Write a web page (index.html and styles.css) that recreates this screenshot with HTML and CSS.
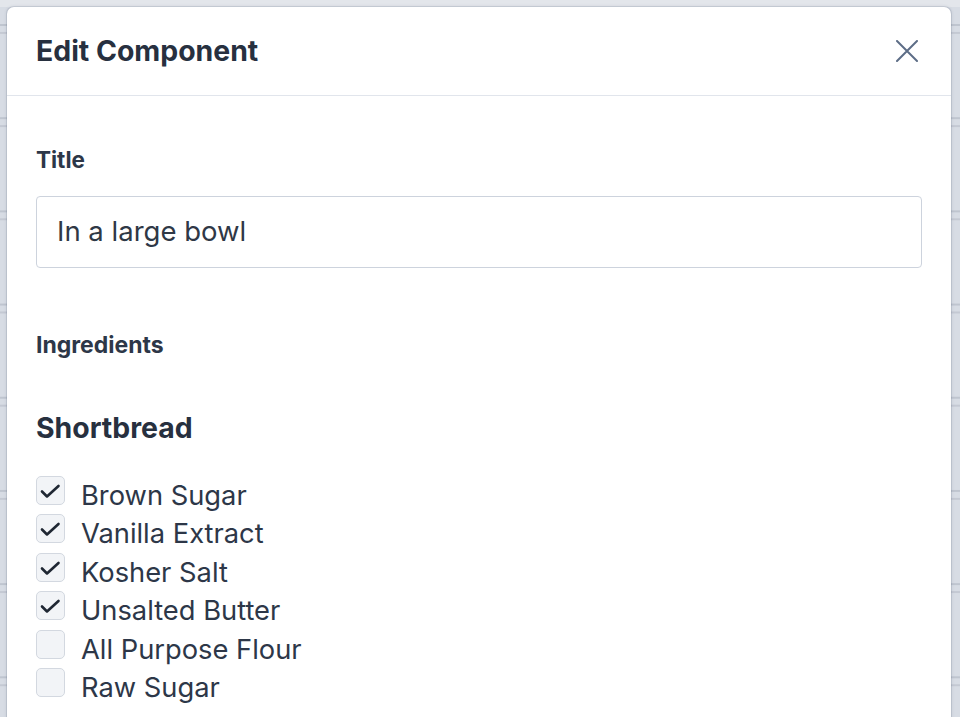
FILE: index.html
```html
<!DOCTYPE html>
<html lang="en">
<head>
<meta charset="utf-8">
<title>Edit Component</title>
<link rel="stylesheet" href="styles.css">
</head>
<body>
<div class="modal">
  <div class="modal-header">
    <h1 class="modal-title">Edit Component</h1>
    <button class="close" aria-label="Close">
      <svg width="22" height="22" viewBox="0 0 22 22"><path d="M1 1 L21 21 M21 1 L1 21" stroke="#5d6d86" stroke-width="2" fill="none" stroke-linecap="round"/></svg>
    </button>
  </div>
  <div class="modal-body">
    <label class="field-label">Title</label>
    <div class="text-input">In a large bowl</div>
    <div class="field-label ingredients">Ingredients</div>
    <h2 class="group-title">Shortbread</h2>
    <ul class="checklist">
      <li class="item"><span class="box checked"><svg width="29" height="29" viewBox="0 0 29 29"><path d="M6 15.5 L11 20.5 L22.5 10" stroke="#1f2733" stroke-width="2.6" fill="none" stroke-linecap="round" stroke-linejoin="round"/></svg></span><span class="item-label">Brown Sugar</span></li>
      <li class="item"><span class="box checked"><svg width="29" height="29" viewBox="0 0 29 29"><path d="M6 15.5 L11 20.5 L22.5 10" stroke="#1f2733" stroke-width="2.6" fill="none" stroke-linecap="round" stroke-linejoin="round"/></svg></span><span class="item-label">Vanilla Extract</span></li>
      <li class="item"><span class="box checked"><svg width="29" height="29" viewBox="0 0 29 29"><path d="M6 15.5 L11 20.5 L22.5 10" stroke="#1f2733" stroke-width="2.6" fill="none" stroke-linecap="round" stroke-linejoin="round"/></svg></span><span class="item-label">Kosher Salt</span></li>
      <li class="item"><span class="box checked"><svg width="29" height="29" viewBox="0 0 29 29"><path d="M6 15.5 L11 20.5 L22.5 10" stroke="#1f2733" stroke-width="2.6" fill="none" stroke-linecap="round" stroke-linejoin="round"/></svg></span><span class="item-label">Unsalted Butter</span></li>
      <li class="item"><span class="box"></span><span class="item-label">All Purpose Flour</span></li>
      <li class="item"><span class="box"></span><span class="item-label">Raw Sugar</span></li>
    </ul>
  </div>
</div>
</body>
</html>
```
FILE: styles.css
```css
html, body {
  margin: 0;
  padding: 0;
  height: 100%;
  overflow: hidden;
}
body {
  font-family: Inter, "Noto Sans", "Liberation Sans", sans-serif;
  color: #2d3748;
  background-color: #d7dce4;
  background-image:
    linear-gradient(to bottom, #e3e6eb 0, #e3e6eb 7px, transparent 7px),
    linear-gradient(to bottom, #bfc5cf 0, #bfc5cf 2px, transparent 2px, transparent 8px, #c4c9d3 8px, #c4c9d3 10px, transparent 10px);
  background-size: 100% 100%, 100% 93.2px;
  background-position: 0 0, 0 24px;
  background-repeat: no-repeat, repeat-y;
  padding: 7px 9px 0 7px;
  box-sizing: border-box;
}
.modal {
  background: #ffffff;
  border-radius: 7px 7px 0 0;
  box-shadow: 0 0 0 1px rgba(60, 72, 95, 0.12), 0 0 3px 1px rgba(60, 72, 95, 0.10);
  height: 730px;
}
.modal-header {
  height: 89px;
  box-sizing: border-box;
  border-bottom: 1px solid #e1e5ec;
  display: flex;
  align-items: center;
  justify-content: space-between;
  padding: 0 33px 0 29px;
}
.modal-title {
  margin: 0;
  font-size: 28.4px;
  font-weight: 700;
  line-height: 34px;
  color: #27303f;
}
.close {
  border: 0;
  background: none;
  padding: 0;
  margin: 0;
  width: 22px;
  height: 22px;
  display: block;
}
.close svg { display: block; }
.modal-body {
  padding: 52px 29px 0 29px;
}
.field-label {
  display: block;
  font-size: 22.5px;
  font-weight: 700;
  line-height: 24px;
  color: #2d3748;
}
.text-input {
  margin-top: 24px;
  height: 72px;
  box-sizing: border-box;
  border: 1.5px solid #cdd3dd;
  border-radius: 4px;
  padding: 0 20px 3px 20px;
  display: flex;
  align-items: center;
  font-size: 27.5px;
  color: #2f3846;
}
.ingredients {
  margin-top: 65px;
  font-size: 23px;
}
.group-title {
  margin: 54px 0 0 0;
  font-size: 28.4px;
  font-weight: 700;
  line-height: 34px;
  color: #27303f;
}
.checklist {
  list-style: none;
  margin: 31px 0 0 0;
  padding: 0;
  display: flex;
  flex-direction: column;
  gap: 9.4px;
}
.item {
  display: flex;
  align-items: center;
  gap: 16px;
  height: 29px;
}
.box {
  width: 29px;
  height: 29px;
  box-sizing: border-box;
  border: 1px solid #d3d8e0;
  border-radius: 5px;
  background: #f2f4f7;
  flex: none;
  position: relative;
}
.box svg {
  position: absolute;
  left: -1px;
  top: -1px;
}
.item-label {
  font-size: 27.3px;
  color: #2d3748;
  line-height: 29px;
  position: relative;
  top: 5px;
}
```
